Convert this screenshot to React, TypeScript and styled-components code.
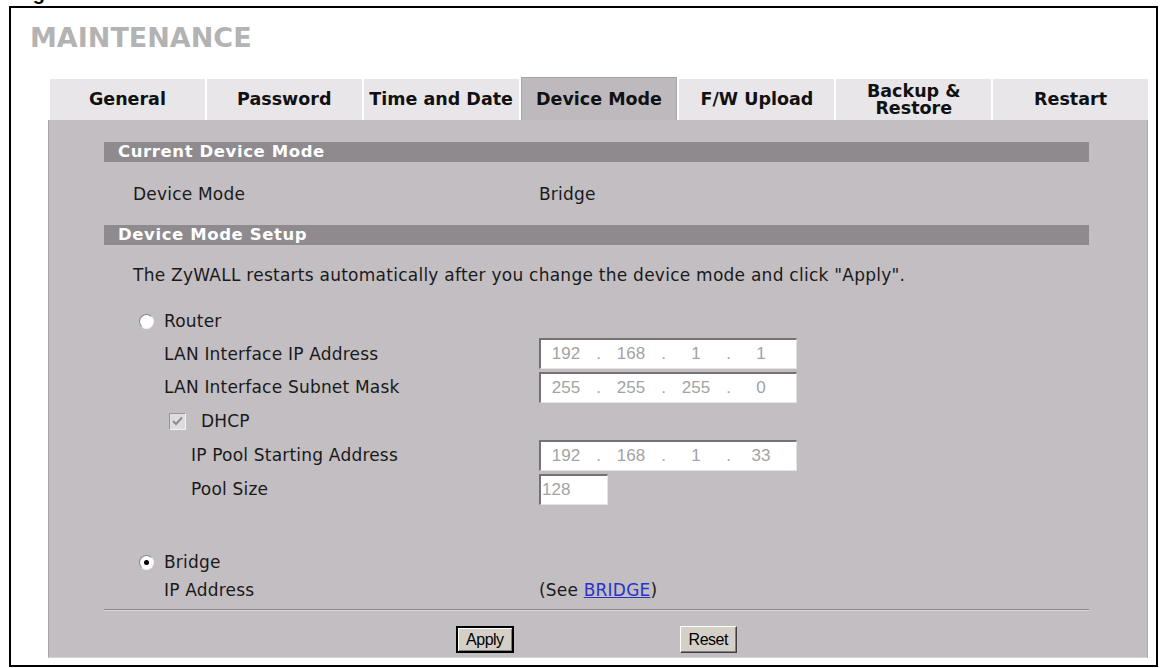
import React from "react";
import styled, { createGlobalStyle, css } from "styled-components";

const GlobalStyle = createGlobalStyle`
  body {
    margin: 0;
    background: #fff;
    font-family: "DejaVu Sans", Verdana, sans-serif;
  }
`;

const Page = styled.div`
  display: flow-root;
`;

const Caption = styled.div`
  height: 20px;
  margin: -17px 0 0 15px;
  font-family: "Liberation Sans", Arial, sans-serif;
  font-size: 20px;
  line-height: 20px;
  font-weight: bold;
  color: #000;
`;

const Frame = styled.div`
  box-sizing: border-box;
  width: 1149px;
  height: 661px;
  margin: 3px 0 0 9px;
  border: 2px solid #000;
  padding-top: 14px;
`;

const Title = styled.h1`
  margin: 0 0 23px 19px;
  font-size: 27px;
  line-height: 32px;
  font-weight: bold;
  color: #b3b3b3;
`;

const TabBar = styled.div`
  display: flex;
  align-items: flex-end;
  gap: 2px;
  width: 1098px;
  height: 43px;
  margin-left: 39px;
`;

const Tab = styled.div<{ $active?: boolean }>`
  flex: 1;
  box-sizing: border-box;
  height: 41px;
  display: flex;
  align-items: center;
  justify-content: center;
  text-align: center;
  white-space: pre-line;
  font-size: 17.5px;
  line-height: 17px;
  font-weight: bold;
  color: #111;
  background: #e9e6e9;
  ${(p) =>
    p.$active &&
    css`
      height: 43px;
      background: #bdb9bd;
      border: 1px solid #a8a4a8;
      border-bottom: none;
    `}
`;

const Panel = styled.div`
  box-sizing: border-box;
  width: 1100px;
  height: 538px;
  margin-left: 37px;
  padding: 22px 58px 0 55px;
  background: #c2bec2;
  border-left: 1px solid #a9a5a9;
  border-right: 1px solid #b0acb0;
  border-bottom: 1px solid #d6d2d6;
`;

const SectionBar = styled.div`
  height: 20px;
  line-height: 20px;
  padding-left: 14px;
  background: #8e8a8e;
  color: #fff;
  font-size: 16.5px;
  letter-spacing: 0.6px;
  font-weight: bold;
`;

const Row = styled.div<{ $h: number }>`
  display: grid;
  grid-template-columns: 435px 1fr;
  align-items: center;
  height: ${(p) => p.$h}px;
  font-size: 17px;
  letter-spacing: 0.2px;
  color: #1a1a1a;
`;

const Label = styled.div<{ $indent: number }>`
  display: flex;
  align-items: center;
  padding-left: ${(p) => p.$indent}px;
  white-space: nowrap;
`;

const Note = styled.div`
  height: 60px;
  line-height: 60px;
  padding-left: 29px;
  font-size: 17px;
  letter-spacing: 0.25px;
  color: #1a1a1a;
  white-space: nowrap;
`;

const Radio = styled.span<{ $checked?: boolean }>`
  box-sizing: border-box;
  width: 15px;
  height: 15px;
  margin-right: 10px;
  border-radius: 50%;
  background: #fff;
  border: 1px solid;
  border-color: #8a878a #f4f4f4 #f4f4f4 #8a878a;
  display: inline-flex;
  align-items: center;
  justify-content: center;
  &::after {
    content: "";
    width: 5px;
    height: 5px;
    border-radius: 50%;
    background: ${(p) => (p.$checked ? "#000" : "transparent")};
  }
`;

const Check = styled.span`
  box-sizing: border-box;
  width: 17px;
  height: 17px;
  margin-right: 15px;
  background: #dedcde;
  border: 1px solid;
  border-color: #9a979a #f2f2f2 #f2f2f2 #9a979a;
  display: inline-flex;
  align-items: center;
  justify-content: center;
`;

const IpBox = styled.div`
  box-sizing: border-box;
  display: flex;
  align-items: center;
  width: 258px;
  height: 31px;
  padding-left: 10px;
  background: #fff;
  border-top: 2px solid #747274;
  border-left: 2px solid #747274;
  border-right: 1px solid #e4e2e4;
  border-bottom: 1px solid #e4e2e4;
  font-family: "Liberation Sans", Arial, sans-serif;
  font-size: 17px;
  letter-spacing: 0;
  color: #a3a3a3;
`;

const Octet = styled.span`
  width: 30px;
  text-align: center;
`;

const Dot = styled.span`
  width: 35px;
  text-align: center;
`;

const SmallBox = styled(IpBox)`
  width: 69px;
  padding-left: 1px;
`;

const Link = styled.a`
  color: #2a32c8;
  text-decoration: underline;
`;

const Spacer = styled.div<{ $h: number }>`
  height: ${(p) => p.$h}px;
`;

const Rule = styled.div`
  margin-top: 5px;
  border-top: 1px solid #8a868a;
  border-bottom: 1px solid #dcd8dc;
`;

const Buttons = styled.div`
  display: flex;
  justify-content: center;
  gap: 166px;
  margin-top: 15px;
`;

const Button = styled.button<{ $default?: boolean }>`
  box-sizing: border-box;
  height: 27px;
  padding: 0 8px;
  font-family: "Liberation Sans", Arial, sans-serif;
  font-size: 16px;
  letter-spacing: -0.5px;
  color: #000;
  background: #d4d0c8;
  border: 1px solid;
  border-color: #fff #404040 #404040 #fff;
  box-shadow: inset -1px -1px #808080;
  ${(p) =>
    p.$default &&
    css`
      border: 2px solid #000;
      box-shadow: inset 1px 1px #fff, inset -1px -1px #808080;
    `}
`;

const tabs = [
  "General",
  "Password",
  "Time and Date",
  "Device Mode",
  "F/W Upload",
  "Backup &\nRestore",
  "Restart",
];

const Ip = ({ parts }: { parts: string[] }) => (
  <IpBox>
    {parts.map((p, i) => (
      <React.Fragment key={i}>
        {i > 0 && <Dot>.</Dot>}
        <Octet>{p}</Octet>
      </React.Fragment>
    ))}
  </IpBox>
);

const CheckMark = () => (
  <svg width="11" height="10" viewBox="0 0 11 10">
    <path d="M1 5 L4 8 L10 1.5" fill="none" stroke="#8f8c8f" strokeWidth="2" />
  </svg>
);

export default function App() {
  return (
    <Page>
      <GlobalStyle />
      <Caption>Figure</Caption>
      <Frame>
        <Title>MAINTENANCE</Title>
        <TabBar>
          {tabs.map((t) => (
            <Tab key={t} $active={t === "Device Mode"}>
              {t}
            </Tab>
          ))}
        </TabBar>
        <Panel>
          <SectionBar>Current Device Mode</SectionBar>
          <Row $h={63}>
            <Label $indent={29}>Device Mode</Label>
            <div>Bridge</div>
          </Row>
          <SectionBar>Device Mode Setup</SectionBar>
          <Note>
            The ZyWALL restarts automatically after you change the device mode and click "Apply".
          </Note>
          <Row $h={32}>
            <Label $indent={35}>
              <Radio />
              Router
            </Label>
          </Row>
          <Row $h={33}>
            <Label $indent={60}>LAN Interface IP Address</Label>
            <Ip parts={["192", "168", "1", "1"]} />
          </Row>
          <Row $h={34}>
            <Label $indent={60}>LAN Interface Subnet Mask</Label>
            <Ip parts={["255", "255", "255", "0"]} />
          </Row>
          <Row $h={34}>
            <Label $indent={65}>
              <Check>
                <CheckMark />
              </Check>
              DHCP
            </Label>
          </Row>
          <Row $h={34}>
            <Label $indent={87}>IP Pool Starting Address</Label>
            <Ip parts={["192", "168", "1", "33"]} />
          </Row>
          <Row $h={34}>
            <Label $indent={87}>Pool Size</Label>
            <SmallBox>128</SmallBox>
          </Row>
          <Spacer $h={42} />
          <Row $h={28}>
            <Label $indent={35}>
              <Radio $checked />
              Bridge
            </Label>
          </Row>
          <Row $h={28}>
            <Label $indent={60}>IP Address</Label>
            <div>
              (See <Link href="#">BRIDGE</Link>)
            </div>
          </Row>
          <Rule />
          <Buttons>
            <Button $default>Apply</Button>
            <Button>Reset</Button>
          </Buttons>
        </Panel>
      </Frame>
    </Page>
  );
}
